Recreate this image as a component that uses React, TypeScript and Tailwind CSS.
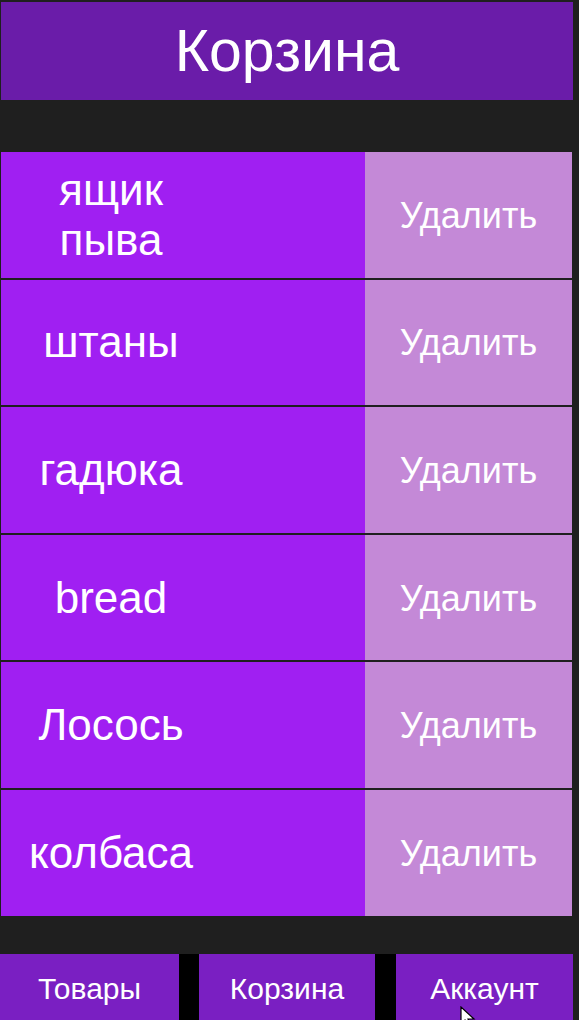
const items = ["ящик пыва", "штаны", "гадюка", "bread", "Лосось", "колбаса"];

function CartRow({ name }: { name: string }) {
  return (
    <div className="flex h-[125.6px]">
      <div className="ml-[1px] flex w-[364px] items-center bg-[#a01ff2]">
        <div className="ml-[10px] w-[200px] text-center text-[44px] leading-[50px] text-white">
          {name}
        </div>
      </div>
      <div className="flex w-[207px] items-center justify-center bg-[#c489d7] pt-[2px] text-[36px] text-white">
        Удалить
      </div>
    </div>
  );
}

export default function App() {
  return (
    <div
      className="relative flex h-[1020px] w-[579px] flex-col overflow-hidden bg-[#1f1f1f]"
      style={{ fontFamily: '"Liberation Sans", Arial, sans-serif' }}
    >
      <div className="ml-[1px] mt-[2px] flex h-[98px] w-[572px] items-center justify-center bg-[#6a1ca9] text-[59px] text-white">
        Корзина
      </div>

      <div className="mt-[52px] flex flex-col gap-[2px]">
        {items.map((name, i) => (
          <CartRow key={i} name={name} />
        ))}
      </div>

      <div className="mt-auto flex h-[66px]">
        <div className="flex w-[179px] items-center justify-center bg-[#7a1fc2] pt-[2px] text-[30px] text-white">
          Товары
        </div>
        <div className="w-[20px] bg-black" />
        <div className="flex w-[176px] items-center justify-center bg-[#7a1fc2] pt-[2px] text-[30px] text-white">
          Корзина
        </div>
        <div className="w-[21px] bg-black" />
        <div className="flex w-[177px] items-center justify-center bg-[#7a1fc2] pt-[2px] text-[30px] text-white">
          Аккаунт
        </div>
      </div>

      {/* mouse pointer */}
      <svg className="absolute left-[460px] top-[1006px]" width="16" height="22" viewBox="0 0 16 22">
        <path d="M1 1 L1 18 L5 14 L8 21 L11 20 L8 13 L14 13 Z" fill="white" stroke="black" strokeWidth="1.2" />
      </svg>
    </div>
  );
}
